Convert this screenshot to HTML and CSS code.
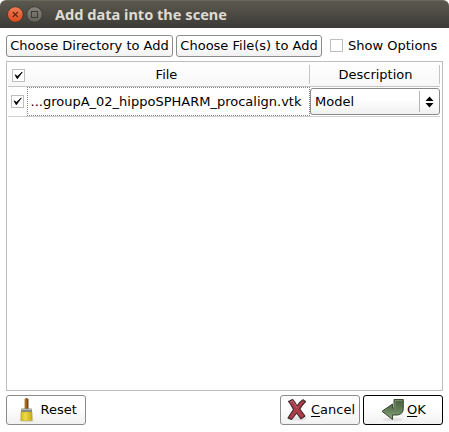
FILE: index.html
```html
<!DOCTYPE html>
<html lang="en">
<head>
<meta charset="utf-8">
<title>Add data into the scene</title>
<link rel="stylesheet" href="styles.css">
</head>
<body>
<div class="window">
  <header class="titlebar">
    <svg class="controls" width="40" height="20" viewBox="0 0 40 20">
      <defs>
        <linearGradient id="red" x1="0" y1="0" x2="0" y2="1"><stop offset="0" stop-color="#f37c55"/><stop offset="1" stop-color="#de4a1c"/></linearGradient>
        <linearGradient id="grey" x1="0" y1="0" x2="0" y2="1"><stop offset="0" stop-color="#85837b"/><stop offset="1" stop-color="#62615a"/></linearGradient>
      </defs>
      <circle cx="10.300" cy="9.500" r="7.800" fill="url(#red)" stroke="#35342f" stroke-width=".8"/>
      <path d="M7.800 7l5 5M12.800 7l-5 5" stroke="#5d2513" stroke-width="1.1"/>
      <circle cx="29.500" cy="9.500" r="7.800" fill="url(#grey)" stroke="#35342f" stroke-width=".8"/>
      <rect x="26.500" y="6.500" width="6" height="6" fill="none" stroke="#3b3a35"/>
    </svg>
    <h1 class="title"><svg class="title-svg" width="180" height="28"><text x="0" y="20" textLength="172" lengthAdjust="spacingAndGlyphs">Add data into the scene</text></svg></h1>
  </header>
  <main class="content">
    <div class="toolbar">
      <button class="button directory">Choose Directory to Add</button>
      <button class="button files">Choose File(s) to Add</button>
      <label class="option"><span class="check"></span>Show Options</label>
    </div>
    <section class="table">
      <div class="row head">
        <div class="cell-check"><span class="check"><svg width="11" height="11" viewBox="0 0 11 11"><path d="M2 4.800L4.300 8.800L9.300 2L4.500 6.300Z" stroke="#000" stroke-width=".8"/></svg></span></div>
        <div class="head-file">File</div>
        <div class="head-desc">Description</div>
      </div>
      <div class="row item">
        <div class="cell-check"><span class="check"><svg width="11" height="11" viewBox="0 0 11 11"><path d="M2 4.800L4.300 8.800L9.300 2L4.500 6.300Z" stroke="#000" stroke-width=".8"/></svg></span></div>
        <div class="file">...groupA_02_hippoSPHARM_procalign.vtk</div>
        <div class="combo"><span class="combo-text">Model</span><span class="arrows"><svg width="9" height="12" viewBox="0 0 9 12"><path d="M.5 5L4.500 .5L8.500 5ZM.5 7L4.500 11.500L8.500 7Z"/></svg></span></div>
      </div>
    </section>
    <footer class="footer">
      <button class="button action reset">
        <svg width="14" height="26" viewBox="0 0 14 26">
          <defs><linearGradient id="wood"><stop offset="0" stop-color="#b98438"/><stop offset=".5" stop-color="#925d1c"/><stop offset="1" stop-color="#704210"/></linearGradient><linearGradient id="gold"><stop offset="0" stop-color="#d0b522"/><stop offset=".4" stop-color="#efdc4c"/><stop offset="1" stop-color="#c5a512"/></linearGradient></defs>
          <ellipse cx="7" cy="24" rx="7" ry="1.500" fill="#e2e2e2"/>
          <path d="M4.500 12V2.500q0-1.500 2-1.500t2 1.500V12Z" fill="url(#wood)"/>
          <path d="M1 15v-2.500q0-1 1-1h9q1 0 1 1V15Z" fill="#858b8b"/>
          <path d="M1.500 12.500h10" stroke="#b4baba"/>
          <path d="M1 15h11l.3 8.500q-6 .6-11.600 0Z" fill="url(#gold)" stroke="#b59c20" stroke-width=".5"/>
        </svg>Reset
      </button>
      <button class="button action cancel">
        <svg width="22" height="24" viewBox="0 0 22 24">
          <ellipse cx="11" cy="20.500" rx="9" ry="2" fill="#e2e2e2"/>
          <path d="M1.500 3.500L5.500 1.500Q8 4 10 8Q12.500 4 16 1.800L18.500 3.500Q15 7 12.800 11.200L18 18L14 20.800L9.700 15L4.500 21.500L1 20Q3.500 16 6.500 11.500Q4.500 7 1.500 3.500Z" fill="#ad3c49" stroke="#43272b" stroke-width="1.100" stroke-linejoin="round"/>
          <path d="M3.500 4l2-1.200q2.500 2.500 4.500 7" fill="none" stroke="#ce7880" stroke-width=".8"/>
        </svg><span class="label"><u>C</u>ancel</span>
      </button>
      <button class="button action ok">
        <svg width="25" height="25" viewBox="0 0 25 25">
          <defs><linearGradient id="green" x1="0" y1="0" x2="0" y2="1"><stop offset="0" stop-color="#485f3f"/><stop offset=".45" stop-color="#5f7954"/><stop offset="1" stop-color="#8aa57b"/></linearGradient></defs>
          <ellipse cx="12" cy="21.500" rx="10" ry="1.800" fill="#e2e2e2"/>
          <path d="M13 1.500H22.300V10.500Q22.300 16 16.500 17H11.500V21.500L1 13.300L11.500 6V10H13Z" fill="url(#green)" stroke="#3b4c35" stroke-linejoin="round"/>
          <path d="M14 10.800V2.600H21.300" fill="none" stroke="#8da381" stroke-width=".7"/>
        </svg><span class="label"><u>O</u>K</span>
      </button>
    </footer>
  </main>
</div>
</body>
</html>
```

FILE: styles.css
```css
* { box-sizing: border-box; }
body { margin: 0; background: #fff; color: #000; font: 13px/16px "DejaVu Sans", sans-serif; }
.window { width: 449px; height: 432px; display: flex; flex-direction: column; }
.titlebar { height: 28px; display: flex; flex: none; padding-left: 5px; background: linear-gradient(#5b594e, #3c3b37); border-top: 1px solid #69675b; border-radius: 6px 6px 0 0; }
.controls { flex: none; margin-top: 4px; }
.title { margin: -1px 0 0 9.500px; line-height: 0; }
.title-svg text { font: bold 14.500px "Noto Sans", sans-serif; fill: #dfdbd2; }
.content { flex: 1; display: flex; flex-direction: column; padding: 7px 6px 7px; }
.toolbar { display: flex; gap: 3px; height: 22px; }
.button { font: inherit; color: inherit; margin: 0; padding: 0; border: 1px solid #8b8b8b; border-radius: 3px; background: linear-gradient(#fff 40%, #f1f1f1); white-space: nowrap; }
.directory { width: 167px; }
.files { width: 146px; }
.option { display: flex; align-items: center; gap: 5px; margin-left: 5px; height: 21px; }
.check { width: 13px; height: 13px; border: 1px solid #bebebe; display: block; flex: none; background: #fff; }
.check svg { display: block; }
.table { margin-top: 4px; height: 330px; border: 1px solid #bebebe; padding: 0 2px 0 1px; }
.row { display: flex; }
.head { height: 25px; background: linear-gradient(#fff, #f7f7f7); border-bottom: 1px solid #c4c4c4; text-align: center; }
.cell-check { width: 19px; flex: none; padding: 7px 0 0 4px; }
.head-file { width: 283px; margin: 3px 0 2px; border-right: 1px solid #c4c4c4; line-height: 20px; padding-right: 3px; }
.head-desc { flex: 1; margin: 3px 0 2px; border-right: 1px solid #c4c4c4; line-height: 20px; padding-left: 2px; }
.item { height: 30px; border-bottom: 1px solid #d0d0d0; }
.item .cell-check { padding: 8px 0 0 3px; }
.file { width: 283px; border: 1px dotted #888; line-height: 28px; padding-left: 2.500px; white-space: nowrap; }
.combo { flex: 1; height: 27px; margin-top: 1px; border: 1px solid #8b8b8b; border-radius: 3px; display: flex; justify-content: space-between; background: linear-gradient(#fff 40%, #f1f1f1); line-height: 25px; padding-left: 4px; }
.arrows { width: 20px; margin: 2px 0; border-left: 1px solid #b5b5b5; display: flex; align-items: center; justify-content: center; padding-right: 1px; }
.footer { display: flex; gap: 3px; margin-top: 4px; height: 30px; }
.action { width: 80px; display: flex; align-items: center; }
.reset { margin-right: auto; padding-left: 13px; gap: 6.500px; }
.cancel { padding-left: 6px; gap: 2px; }
.ok { padding-left: 17px; gap: 1px; border-color: #000; }
.label u { text-underline-offset: 2px; text-decoration-skip-ink: none; }
```
